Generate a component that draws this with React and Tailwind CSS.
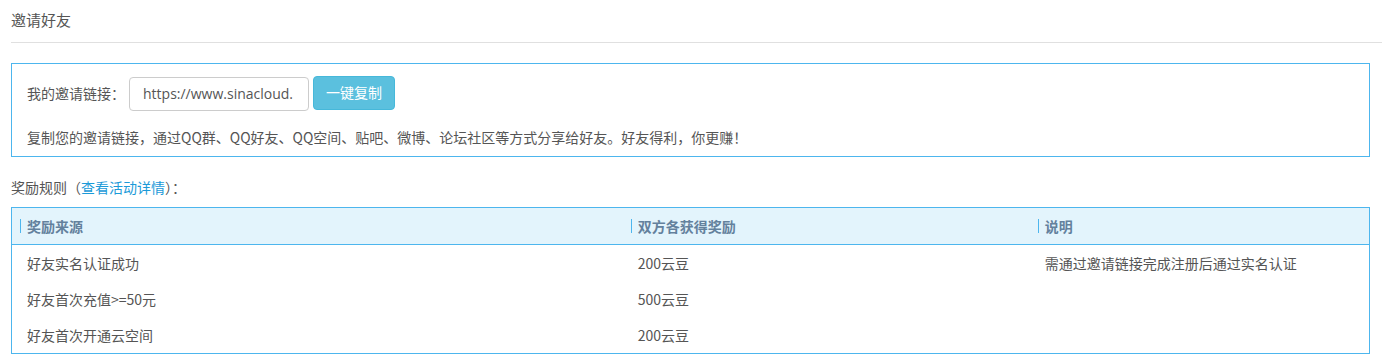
export default function App() {
  const font = { fontFamily: '"Microsoft YaHei", "Noto Sans CJK SC", "Noto Sans", sans-serif' };
  const rows = [
    ["好友实名认证成功", "200云豆", "需通过邀请链接完成注册后通过实名认证"],
    ["好友首次充值>=50元", "500云豆", ""],
    ["好友首次开通云空间", "200云豆", ""],
  ];
  return (
    <div className="bg-white w-full h-[364px] pl-[11px] pr-[1px] text-[14px] text-[#555]" style={font}>
      <div className="pt-[10px] pb-[12px] leading-[20px] text-[15px] text-[#555] border-b border-[#e0e0e0]">
        邀请好友
      </div>
      <div className="mt-[20px] mr-[12px] border border-[#4db6ee] pl-[15px] pt-[12px] pb-[9px]">
        <div className="flex items-center h-[34px]">
          <span className="leading-[20px]">我的邀请链接：</span>
          <input
            readOnly
            value="https://www.sinacloud."
            className="ml-[4px] mt-[1px] w-[180px] h-[34px] border border-[#ccc] rounded-[4px] px-[13px] text-[14px] text-[#555] outline-none"
            style={{ fontFamily: '"Open Sans", "Noto Sans", sans-serif' }}
          />
          <button className="ml-[4px] -mt-[1px] w-[82px] h-[34px] rounded-[4px] bg-[#5bc0de] border border-[#46b8da] text-white text-[14px]">
            一键复制
          </button>
        </div>
        <div className="mt-[17px] leading-[20px]">
          复制您的邀请链接，通过QQ群、QQ好友、QQ空间、贴吧、微博、论坛社区等方式分享给好友。好友得利，你更赚！
        </div>
      </div>
      <div className="mt-[20px] leading-[20px]">
        奖励规则（<span className="text-[#1b9ad8]">查看活动详情</span>）：
      </div>
      <div className="mt-[10px] mr-[12px] border border-[#4db6ee]">
        <div className="grid grid-cols-[45fr_30fr_25fr] h-[37px] bg-[#e3f4fc] border-b border-[#4db6ee] items-center">
          {["奖励来源", "双方各获得奖励", "说明"].map((h) => (
            <div key={h} className="pl-[8px] flex items-center">
              <span className="w-px h-[14px] bg-[#4db6ee]" />
              <span className="ml-[6px] font-bold text-[#63819d] leading-[20px]">{h}</span>
            </div>
          ))}
        </div>
        {rows.map((r, i) => (
          <div key={i} className="grid grid-cols-[45fr_30fr_25fr] h-[36px] items-center">
            {r.map((c, j) => (
              <div key={j} className="pl-[15px] leading-[20px]">{c}</div>
            ))}
          </div>
        ))}
      </div>
    </div>
  );
}
